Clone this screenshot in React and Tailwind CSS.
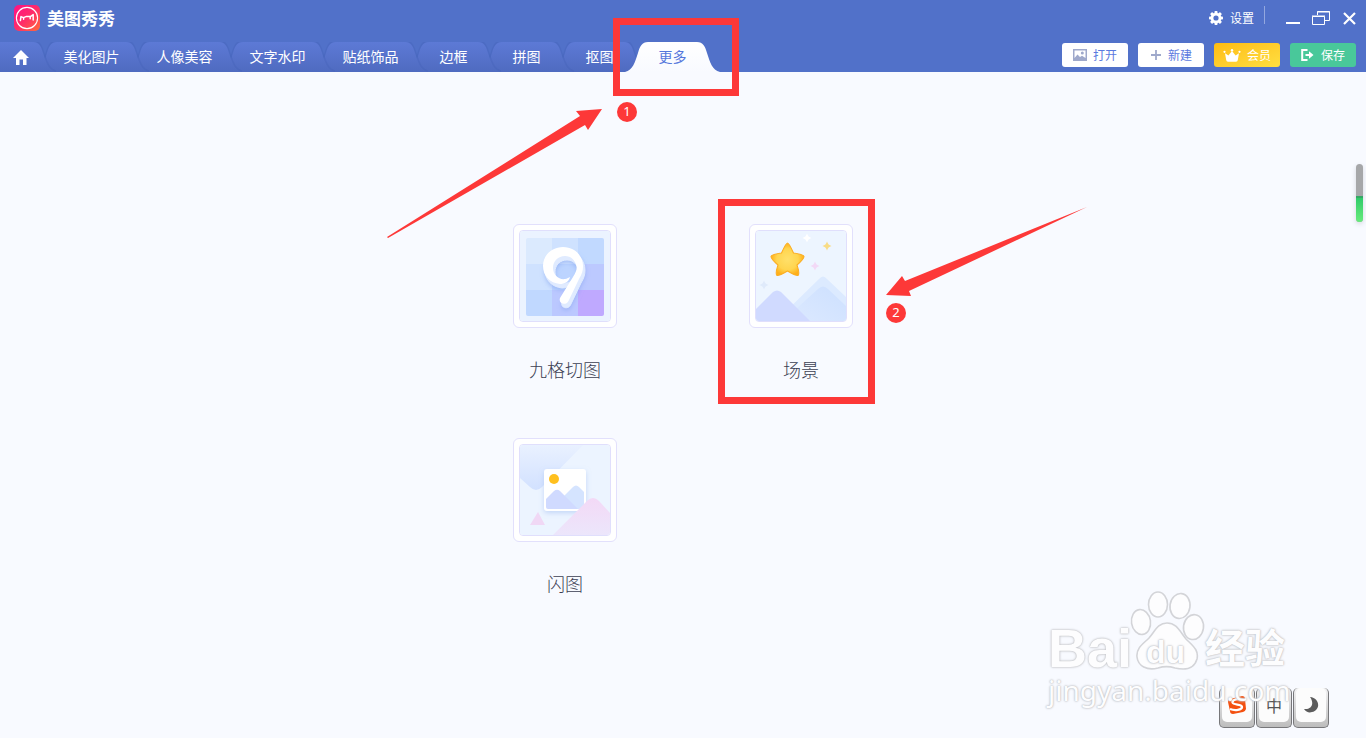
import React from "react";

const tabs = [
  { label: "美化图片", wide: true },
  { label: "人像美容", wide: true },
  { label: "文字水印", wide: true },
  { label: "贴纸饰品", wide: true },
  { label: "边框" },
  { label: "拼图" },
  { label: "抠图" },
  { label: "更多", active: true },
];

const layers = ["z-10", "z-9", "z-8", "z-7", "z-6", "z-5", "z-4", "z-20"];

function TabShape({ width, active, flush }) {
  const w = width + 22;
  const left = flush ? "M0 30 V0" : "M0 30 C8 28 10 20 13 11 C15 4 17 0 23 0";
  const d = `${left} H${w - 23} C${w - 17} 0 ${w - 15} 4 ${w - 13} 11 C${w - 10} 20 ${w - 8} 28 ${w} 30 Z`;
  const id = `tab-${width}-${active ? "on" : "off"}`;
  return (
    <svg className="pointer-events-none absolute top-0 -left-[11px] h-[30px] max-w-none overflow-hidden" width={w} height="30" viewBox={`0 0 ${w} 30`} aria-hidden="true">
      <defs>
        <linearGradient id={id} x1="0" y1="0" x2="0" y2="1">
          <stop offset="0" stopColor={active ? "#ffffff" : "#5d7ad6"} />
          <stop offset="1" stopColor={active ? "#f8faff" : "#4f6bc0"} />
        </linearGradient>
      </defs>
      {!active && <path d={d} fill="none" stroke="#3f5cb2" strokeOpacity="0.28" strokeWidth="3" />}
      <path d={d} fill={`url(#${id})`} />
    </svg>
  );
}

function Logo() {
  return (
    <svg width="26" height="26" viewBox="0 0 26 26" aria-hidden="true">
      <defs>
        <linearGradient id="logo" x1="0" y1="0" x2="1" y2="1">
          <stop offset="0" stopColor="#ff1187" />
          <stop offset="0.5" stopColor="#ff2c69" />
          <stop offset="1" stopColor="#ff6c38" />
        </linearGradient>
      </defs>
      <rect width="26" height="26" rx="5" fill="url(#logo)" />
      <circle cx="13" cy="13" r="10.6" fill="none" stroke="#fff" strokeWidth="1.1" />
      <path d="M6.4 15.6 L7 11.6 L9.4 12.6 L12.6 11.4 L16.4 11.6 L19.2 9.6 L19.2 15 M9.6 12.8 V14.2 M16.2 11.8 V13.8" fill="none" stroke="#fff" strokeWidth="1.5" strokeLinejoin="round" strokeLinecap="round" />
    </svg>
  );
}

function Gear() {
  return (
    <svg width="14" height="14" viewBox="0 0 14 14" aria-hidden="true">
      <g fill="#fff">
        {[0, 45, 90, 135].map((a) => (
          <rect key={a} x="5.5" y="0" width="3" height="14" rx="0.8" transform={`rotate(${a} 7 7)`} />
        ))}
        <circle cx="7" cy="7" r="5.3" />
      </g>
      <circle cx="7" cy="7" r="2.6" fill="#5171c9" />
    </svg>
  );
}

const actionIcons = {
  open: (
    <svg width="14" height="12" viewBox="0 0 14 12" aria-hidden="true">
      <path fillRule="evenodd" d="M0 0H14V12H0Z M1.5 1.5V9L4.5 5.5L7 8L9 6.8L12.5 9V1.5Z" fill="#9fa9cb" />
      <circle cx="9.3" cy="4" r="1.5" fill="#9fa9cb" />
    </svg>
  ),
  create: (
    <svg width="12" height="12" viewBox="0 0 12 12" aria-hidden="true">
      <path d="M6 1V11M1 6H11" stroke="#9fa9cb" strokeWidth="1.8" />
    </svg>
  ),
  vip: (
    <svg width="18" height="13" viewBox="0 0 18 13" aria-hidden="true">
      <path d="M2 4.2 L5.4 6.6 L9 2 L12.6 6.6 L16 4.2 L14.8 11 Q14.6 12.8 13 12.8 H5 Q3.4 12.8 3.2 11 Z" fill="#fff" />
      <circle cx="1.5" cy="2.8" r="1.1" fill="#fff" />
      <circle cx="9" cy="1.2" r="1.2" fill="#fff" />
      <circle cx="16.5" cy="2.8" r="1.1" fill="#fff" />
    </svg>
  ),
  save: (
    <svg width="14" height="12" viewBox="0 0 14 12" aria-hidden="true">
      <path d="M6.5 1H1.2V11H6.5" fill="none" stroke="#fff" strokeWidth="2" />
      <path d="M4.5 5H8V2.2L12.5 6L8 9.8V7H4.5Z" fill="#fff" />
    </svg>
  ),
};

function Action({ icon, children, tone }) {
  return (
    <button type="button" className={`flex h-6 w-[66px] items-center justify-center gap-1.5 rounded-[3px] text-[12px] leading-6 ${tone}`}>
      {actionIcons[icon]}
      <span>{children}</span>
    </button>
  );
}

function NineArt() {
  const cells = ["#dbeafe", "#cfe2ff", "#c1d9ff", "#cfe2ff", "#bcd4ff", "#bcc9ff", "#c0d8ff", "#bbc8ff", "#bfa9ff"];
  const nine = "M50 46 C49 51 44 53 40 53 C30 52 23 45 23 35 C23 24 32 16 43 16 C55 16 63 25 63 35 C63 40 62 43 59 48 L48.5 70 C46 75 38 73 40 67 L53 46 C56 41 57 39 56.5 35 C55 29 51 25 45 25 C38 25 33 30 33 37 C33 44 39 49 45 48 C47 47.7 49 46.5 50 46Z";
  return (
    <svg width="90" height="90" viewBox="0 0 90 90" aria-hidden="true">
      <defs>
        <clipPath id="cells"><rect x="6" y="7" width="78" height="78" rx="2" /></clipPath>
        <filter id="soft" x="-30%" y="-30%" width="160%" height="160%"><feGaussianBlur stdDeviation="2.5" /></filter>
      </defs>
      <rect width="90" height="90" fill="#ebf3ff" />
      <g clipPath="url(#cells)">
        {cells.map((c, i) => (
          <rect key={i} x={6 + (i % 3) * 26} y={7 + Math.floor(i / 3) * 26} width="26" height="26" fill={c} />
        ))}
      </g>
      <path d={nine} fill="#7f9fee" fillOpacity="0.6" filter="url(#soft)" transform="translate(2 6)" />
      <path d={nine} fill="#e0ebff" stroke="#e0ebff" strokeWidth="1" transform="translate(2 4)" />
      <path d={nine} fill="#fff" />
    </svg>
  );
}

const spark = (x, y, r, fill) => (
  <path d={`M${x} ${y - r} Q${x + r * 0.22} ${y - r * 0.22} ${x + r} ${y} Q${x + r * 0.22} ${y + r * 0.22} ${x} ${y + r} Q${x - r * 0.22} ${y + r * 0.22} ${x - r} ${y} Q${x - r * 0.22} ${y - r * 0.22} ${x} ${y - r}Z`} fill={fill} />
);

function SceneArt() {
  return (
    <svg width="90" height="90" viewBox="0 0 90 90" aria-hidden="true">
      <defs>
        <radialGradient id="star"><stop offset="0" stopColor="#ffe06a" /><stop offset="0.65" stopColor="#ffd54f" /><stop offset="1" stopColor="#ffb01a" /></radialGradient>
        <linearGradient id="peak" x1="0" y1="1" x2="1" y2="0"><stop offset="0" stopColor="#dce9ff" /><stop offset="1" stopColor="#cde0ff" /></linearGradient>
      </defs>
      <rect width="90" height="90" fill="#edf5ff" />
      <path d="M18 92 L63 48 Q67 43 71 48 L92 68 V92Z" fill="#dceaff" />
      <path d="M36 92 L40 78 L62 58 Q67 53 72 58 L92 77 V92Z" fill="url(#peak)" />
      <path d="M0 78 L17 61 Q21 58 25 61 L54 90 H0Z" fill="#d0daff" />
      <path d="M31.5 12 Q33 12 37.5 22 Q47.5 23.5 48 25.5 Q48 28 41 34 Q44 43 42 44.5 Q40 45 31.5 40 Q23 45 21 44.5 Q19 43 22 34 Q15 28 15 25.5 Q15.5 23.5 25.5 22 Q30 12 31.5 12Z" fill="url(#star)" stroke="#fbae24" strokeWidth="1.1" strokeLinejoin="round" />
      {spark(51, 7, 4.5, "#ffffff")}
      {spark(71, 15, 4.5, "#f8dc86")}
      {spark(59, 35, 4.5, "#f2d9f6")}
      {spark(8, 54, 4.5, "#dfeafb")}
    </svg>
  );
}

function FlashArt() {
  return (
    <svg width="90" height="90" viewBox="0 0 90 90" aria-hidden="true">
      <defs>
        <linearGradient id="sky" x1="0" y1="0" x2="0" y2="1"><stop offset="0" stopColor="#e9f1ff" /><stop offset="1" stopColor="#d2e1ff" /></linearGradient>
        <linearGradient id="pink" x1="0" y1="0" x2="0" y2="1"><stop offset="0" stopColor="#f3d9f6" /><stop offset="1" stopColor="#ece6fb" /></linearGradient>
        <filter id="lift" x="-30%" y="-30%" width="160%" height="160%"><feDropShadow dx="0" dy="2" stdDeviation="2.5" floodColor="#9bb9f0" floodOpacity="0.5" /></filter>
      </defs>
      <rect width="90" height="90" fill="#ecf4ff" />
      <path d="M0 0H63L22 42Q16 48 10 42L0 33Z" fill="url(#sky)" />
      <path d="M18 67L25 80H10Z" fill="#f0d8f5" />
      <rect x="24" y="24" width="42" height="42" rx="3" fill="#fff" filter="url(#lift)" />
      <circle cx="34" cy="34" r="5" fill="#ffc01f" />
      <path d="M44 51L53 42Q56 39 59 42L64 47V64H46Z" fill="#d5e4ff" />
      <path d="M26 54L34 46Q37 43.5 40 46L58 64H28Q26 64 26 62Z" fill="#d0daff" />
      <path d="M33 90L67 56Q73 50 79 56L90 68V90Z" fill="url(#pink)" />
    </svg>
  );
}

function Tool({ label, art }) {
  return (
    <button type="button" className="flex w-[104px] flex-col items-center gap-[25px] text-[18px] leading-8 font-light text-[#3c3f53]">
      <span className="rounded-md border border-[#e2e0fc] bg-white p-[5px]">
        <span className="block overflow-hidden rounded-[4px] border border-[#e0dffc]">{art}</span>
      </span>
      <span>{label}</span>
    </button>
  );
}

function Annotations() {
  return (
    <div className="pointer-events-none absolute inset-0 z-30 overflow-hidden">
      <div className="absolute top-[18px] left-[613px] h-[78px] w-[126px] border-7 border-[#fd3838]" />
      <div className="absolute top-[199px] left-[calc(50%+35px)] h-[205px] w-[157px] border-7 border-[#fd3838]" />
      <svg className="absolute top-[108px] left-[386px]" width="218" height="132" viewBox="0 0 218 132" aria-hidden="true">
        <path d="M1 129L194 8L190 3L216 1L202 22L199 17L2 130Z" fill="#fd3838" />
      </svg>
      <svg className="absolute top-[206px] left-[calc(50%+202px)]" width="204" height="94" viewBox="0 0 204 94" aria-hidden="true">
        <path d="M202 1L24 85L26 90L1 89L17 70L20 75Z" fill="#fd3838" />
      </svg>
      <span className="absolute top-[102px] left-[617px] size-5 rounded-full bg-[#fd3838] text-center font-['Noto_Sans'] text-[13px] leading-[19px] text-white">1</span>
      <span className="absolute top-[303px] left-[calc(50%+203px)] size-5 rounded-full bg-[#fd3838] text-center font-['Noto_Sans'] text-[13px] leading-[19px] text-white">2</span>
    </div>
  );
}

const glow = "[text-shadow:0_0_1px_#bfc0c4,0_0_2px_#c4c5c9,0_0_3px_#d0d1d5]";

function Watermark() {
  return (
    <div className={`pointer-events-none absolute right-[68px] bottom-[24px] z-20 h-[124px] w-[250px] text-[#fdfdfe] ${glow}`}>
      <svg className="absolute -top-1.5 left-20" width="80" height="86" viewBox="0 0 80 86" aria-hidden="true">
        <g fill="#fdfdfe" stroke="#d3d4d8" strokeWidth="1.6">
          <ellipse cx="13" cy="38" rx="9.5" ry="12.5" transform="rotate(-8 13 38)" />
          <ellipse cx="30" cy="20.5" rx="9.5" ry="12.5" />
          <ellipse cx="52" cy="22" rx="10" ry="12.5" transform="rotate(8 52 22)" />
          <ellipse cx="65.5" cy="43" rx="10" ry="12.5" transform="rotate(8 65 43)" />
          <path d="M39 39C49 39 52 48 58 55C65 62 71 66 69 75C66 86 55 86 47 84C41 82 36 82 30 84C19 87 10 82 9 73C8 64 15 60 21 54C27 47 30 39 39 39Z" />
        </g>
      </svg>
      <span className="absolute top-[36px] left-0 font-['Liberation_Sans'] text-[54px] leading-11 font-bold">Bai</span>
      <span className="absolute top-[46px] left-[98px] font-['Liberation_Sans'] text-[32px] leading-8 font-bold">du</span>
      <span className="absolute top-[34px] left-[157px] font-['Noto_Sans_CJK_SC'] text-[40px] leading-11 font-bold">经验</span>
      <span className="absolute top-[84px] left-0 font-['Noto_Sans'] text-[28px] leading-8">jingyan.baidu.com</span>
    </div>
  );
}

function Key({ label, children }) {
  return (
    <button type="button" aria-label={label} className="h-10 w-9 rounded-[5px] border border-t-0 border-[#77777a] bg-gradient-to-b from-[#f3f3f4] to-[#bdbdbd] px-0.5 pb-[5px]">
      <span className="flex h-full items-center justify-center rounded-[5px] bg-[#fcfcfc] text-[16px] leading-5 text-[#555]">{children}</span>
    </button>
  );
}

export default function App() {
  return (
    <div className="relative flex min-h-screen flex-col overflow-hidden bg-[#f8faff] font-['Noto_Sans_CJK_SC',sans-serif]">
      <header className="bg-[#5171c9] text-white">
        <div className="flex h-[42px] items-start justify-between pr-2.5 pl-3.5">
          <div className="flex items-center gap-[7px] pt-[5px]">
            <Logo />
            <h1 className="text-[17px] leading-6 font-bold">美图秀秀</h1>
          </div>
          <div className="flex h-9 items-center">
            <button type="button" className="flex items-center gap-[7px] text-[12px] leading-6">
              <Gear />
              设置
            </button>
            <span className="mb-1.5 ml-2.5 h-[18px] w-px bg-[#93a7df]" />
            <button type="button" aria-label="最小化" className="ml-[21px]">
              <svg width="14" height="14" viewBox="0 0 14 14"><path d="M0 12H14" stroke="#fff" strokeWidth="2" /></svg>
            </button>
            <button type="button" aria-label="还原" className="ml-3">
              <svg width="18" height="14" viewBox="0 0 18 14"><path d="M5.5 4V0.5H17.5V9.5H13M5 1H18" fill="none" stroke="#fff" /><path d="M0.5 5.5H12.5V13.5H0.5ZM0 5H13" fill="none" stroke="#fff" /></svg>
            </button>
            <button type="button" aria-label="关闭" className="ml-[13px]">
              <svg width="13" height="13" viewBox="0 0 13 13"><path d="M1 1L12 12M12 1L1 12" stroke="#fff" strokeWidth="2.2" /></svg>
            </button>
          </div>
        </div>
        <div className="flex h-[30px] items-start justify-between pr-2.5">
          <nav className="isolate flex overflow-hidden pr-[11px]">
            <a href="#home" aria-label="首页" className="relative z-11 flex h-[30px] w-[45px] items-center justify-center">
              <TabShape width={45} flush />
              <svg className="relative mr-1" width="16" height="15" viewBox="0 0 16 15" aria-hidden="true"><path d="M8 0L16 8H13.5V15H10V9.5H6.5V15H3V8H0Z" fill="#fff" /></svg>
            </a>
            {tabs.map((tab, i) => (
              <a key={tab.label} href="#tab" aria-current={tab.active ? "page" : undefined} className={`relative h-[30px] text-center text-[14px] leading-7 ${layers[i]} ${tab.wide ? "w-[93px]" : "w-[73px]"} ${tab.active ? "text-[#5577dc]" : "text-white"}`}>
                <TabShape width={tab.wide ? 93 : 73} active={tab.active} />
                <span className="relative">{tab.label}</span>
              </a>
            ))}
          </nav>
          <div className="flex gap-2.5 pt-px">
            <Action icon="open" tone="bg-white text-[#5b7ae0]">打开</Action>
            <Action icon="create" tone="bg-white text-[#5b7ae0]">新建</Action>
            <Action icon="vip" tone="bg-gradient-to-br from-[#ffbc0c] to-[#ffdf40] text-white">会员</Action>
            <Action icon="save" tone="bg-[#49c89a] text-white">保存</Action>
          </div>
        </div>
      </header>

      <main className="flex flex-1 justify-center pt-[152px] pb-10">
        <div className="grid grid-cols-2 content-start gap-x-[132px] gap-y-[53px]">
          <Tool label="九格切图" art={<NineArt />} />
          <Tool label="场景" art={<SceneArt />} />
          <Tool label="闪图" art={<FlashArt />} />
        </div>
      </main>

      <div className="absolute top-[164px] right-[3px] flex h-[58px] w-[7px] flex-col overflow-hidden rounded-full bg-[#a6a7a9] shadow-[0_2px_5px_#d5d8df]">
        <span className="mt-8 flex-1 border-t-2 border-[#35a866] bg-gradient-to-b from-[#2fcb6a] to-[#66ec7c]" />
      </div>

      <div className="absolute right-[37px] bottom-2.5 z-10 flex gap-px">
        <Key label="搜狗输入法">
          <svg width="20" height="20" viewBox="0 0 20 20" aria-hidden="true">
            <path d="M3 4L15 1Q18 1 18 4L19 14Q18 17 16 17L6 19Q3 19 3 16L1 7Q1 4 3 4Z" fill="#f4500f" />
            <path d="M17 4.5C11 3 5 4.5 5.5 7.5C6.5 10.5 15 8.5 15 12C15 15 8 16 3 14" fill="none" stroke="#fff" strokeWidth="2.3" />
          </svg>
        </Key>
        <Key>中</Key>
        <Key label="月亮">
          <svg width="16" height="18" viewBox="0 0 16 18" aria-hidden="true"><path d="M7 1C17 2 18 14 9 16C6 17 3 16 1 13C8 14 12 8 7 1Z" fill="#5c5c5c" /></svg>
        </Key>
      </div>
      <Watermark />
      <Annotations />
    </div>
  );
}
